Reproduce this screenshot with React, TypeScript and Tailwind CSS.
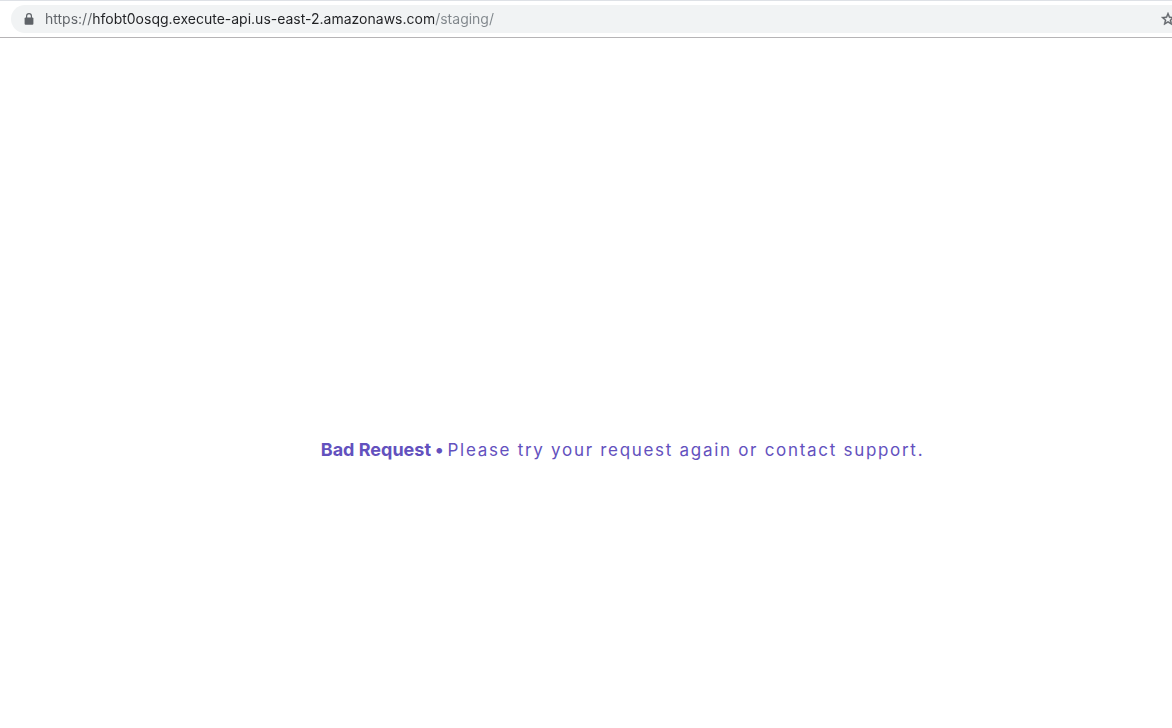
import { useState } from "react";

function LockIcon() {
  return (
    <svg viewBox="0 0 10 12" className="h-3 w-2.5 shrink-0" aria-hidden="true">
      <rect x="0.6" y="4.4" width="8.8" height="7.4" rx="1" fill="#5f6368" />
      <path d="M2.6 5V3.1a2.4 2.4 0 0 1 4.8 0V5" fill="none" stroke="#5f6368" strokeWidth="1.2" />
    </svg>
  );
}

function StarIcon() {
  return (
    <svg viewBox="0 0 24 24" className="h-4 w-4 shrink-0" fill="#5f6368" stroke="#5f6368" strokeWidth="0.6" aria-hidden="true">
      <path d="M22 9.24l-7.19-.62L12 2 9.19 8.63 2 9.24l5.46 4.73L5.82 21 12 17.27 18.18 21l-1.63-7.03L22 9.24zM12 15.4l-3.76 2.27 1-4.28-3.32-2.88 4.38-.38L12 6.1l1.71 4.04 4.38.38-3.32 2.88 1 4.28L12 15.4z" />
    </svg>
  );
}

function AddressBar() {
  const [url, setUrl] = useState("https://hfobt0osqg.execute-api.us-east-2.amazonaws.com/staging/");
  return (
    <header className="overflow-hidden border-t border-b border-t-[#dee1e6] border-b-[#b6b4b6] bg-white py-1 pl-[11px]">
      <div className="flex h-7 items-center rounded-l-full bg-[#f1f3f4] pl-[13px]">
        <LockIcon />
        <input
          type="text"
          aria-label="Address"
          value={url}
          onChange={(e) => setUrl(e.target.value)}
          className="ml-[11px] h-5 min-w-0 flex-1 bg-[linear-gradient(to_right,#5f6368_48px,#202124_48px,#202124_389px,#80868b_389px)] bg-clip-text font-['Inter',sans-serif] text-sm text-transparent caret-[#202124] outline-none"
        />
        <button type="button" aria-label="Bookmark this page" className="-mr-1 shrink-0">
          <StarIcon />
        </button>
      </div>
    </header>
  );
}

export default function App() {
  return (
    <div className="flex min-h-screen flex-col bg-white">
      <AddressBar />
      <main className="flex flex-1 items-center justify-center pt-[134px] pl-[73px] font-['Inter',sans-serif] text-lg text-[#6351be]">
        <p className="flex items-baseline gap-1 whitespace-nowrap">
          <strong className="font-bold">Bad Request</strong>
          <strong className="font-bold">•</strong>
          <span className="text-[17px] tracking-widest">Please try your request again or contact support.</span>
        </p>
      </main>
    </div>
  );
}
